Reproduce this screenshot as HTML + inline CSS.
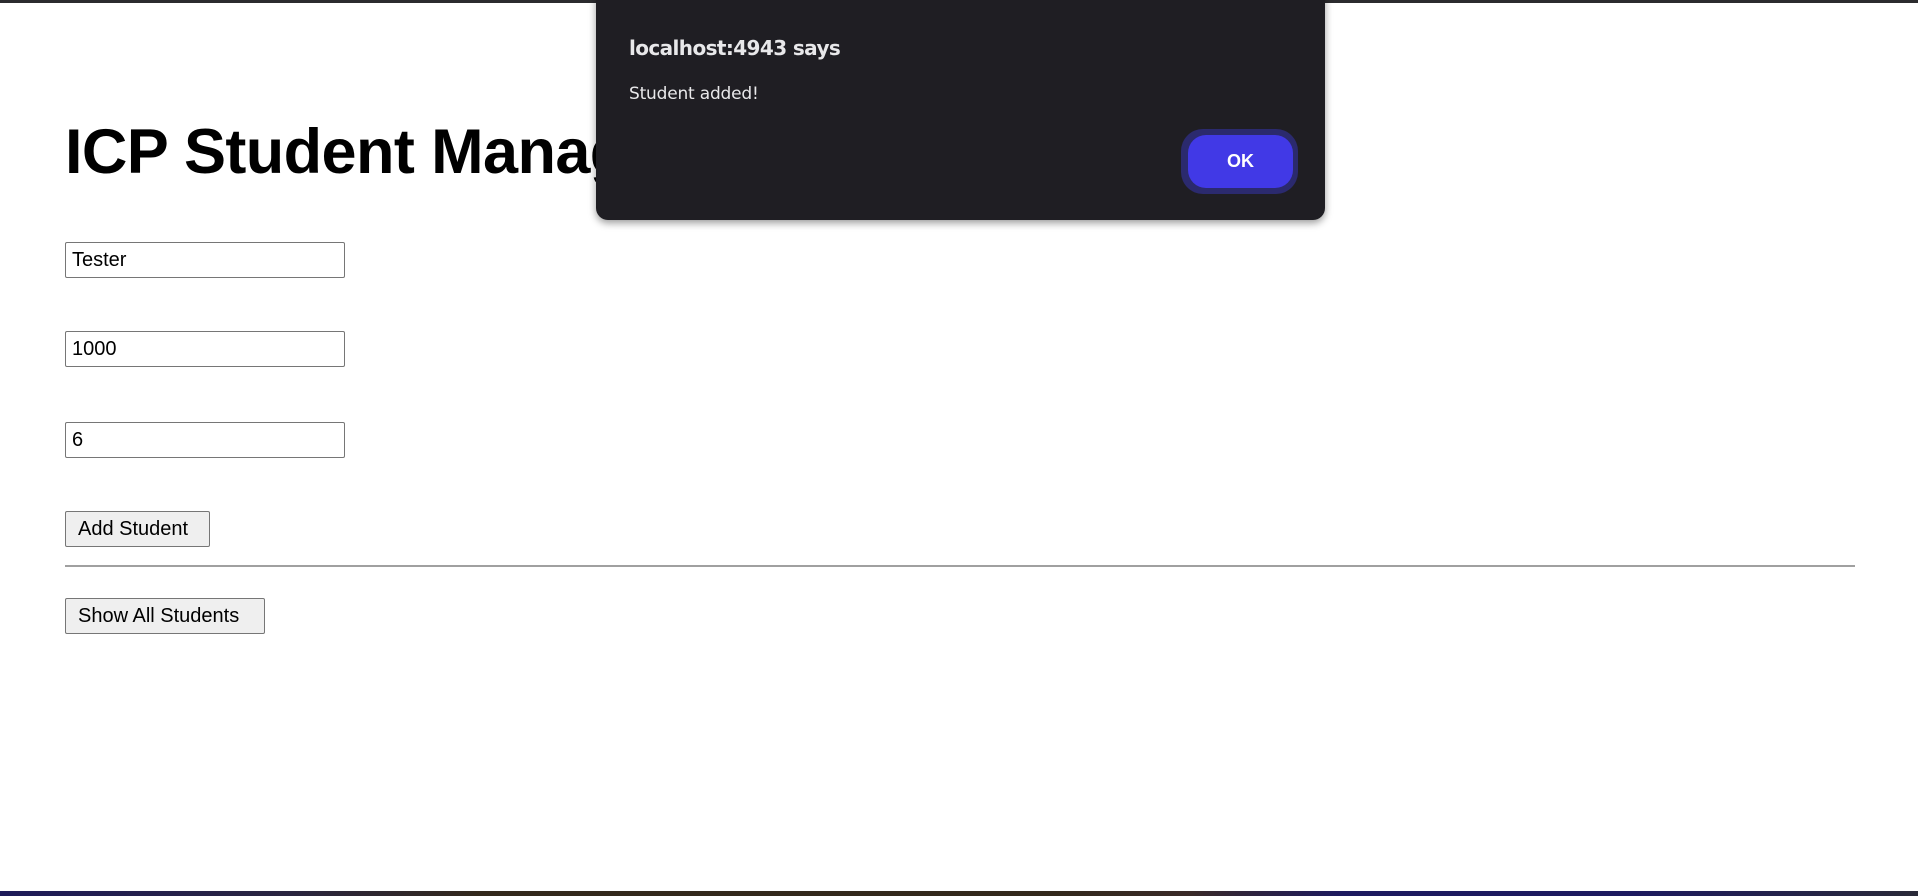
<!DOCTYPE html>
<html><head><meta charset="utf-8"><style>
html,body{margin:0;padding:0;width:1918px;height:896px;overflow:hidden;background:#fff;position:relative;font-family:"Liberation Sans",Arial,sans-serif}
.topbar{position:absolute;left:0;top:0;width:1918px;height:3px;background:#2b2b2e}
.bot{position:absolute;left:0;top:891px;width:1918px;height:5px;background:linear-gradient(90deg,#1e1b5a 0%,#2a2540 15%,#33291c 25%,#33291c 55%,#3a2a28 62%,#1d1a60 70%,#1d1a60 85%,#2a2a38 100%)}
h1{position:absolute;left:65px;top:114px;margin:0;font-size:63px;font-weight:bold;color:#000;white-space:nowrap;line-height:76px;letter-spacing:-0.6px}
.inp{position:absolute;left:65px;border:1px solid #767676;border-radius:2px;font-size:20px;line-height:34px;padding-left:6px;box-sizing:border-box;width:280px;height:36px;color:#000}
.btn{position:absolute;left:65px;height:36px;border:1px solid #767676;border-radius:2px;background:#efefef;font-size:20px;line-height:34px;box-sizing:border-box;padding:0 12px;color:#000;white-space:nowrap}
hr{position:absolute;left:65px;top:565px;width:1790px;margin:0;border:0;border-top:2px solid #a0a0a0}
.dlg{position:absolute;left:596px;top:-12px;width:729px;height:232px;background:#1f1e23;border-radius:12px;box-shadow:0 3px 8px rgba(0,0,0,.4)}
.t1{position:absolute;left:33px;top:48px;color:#e8e8ea;font-size:20px;font-weight:bold;font-family:"DejaVu Sans","Liberation Sans",sans-serif;letter-spacing:-0.6px}
.t2{position:absolute;left:33px;top:96px;color:#e8e8ea;font-size:17px;font-family:"DejaVu Sans","Liberation Sans",sans-serif;letter-spacing:-0.2px}
.ring{position:absolute;left:585px;top:141px;width:117px;height:65px;border-radius:22px;background:#2b2a6e}
.ok{position:absolute;left:592px;top:147px;width:105px;height:53px;border-radius:18px;background:#4139e6;color:#fff;font-weight:bold;font-size:18px;text-align:center;line-height:53px}
</style></head><body>
<div class="topbar"></div>
<h1>ICP Student Management</h1>
<div class="inp" style="top:242px">Tester</div>
<div class="inp" style="top:331px">1000</div>
<div class="inp" style="top:422px">6</div>
<div class="btn" style="top:511px;width:145px">Add Student</div>
<hr>
<div class="btn" style="top:598px;width:200px">Show All Students</div>
<div class="dlg">
<div class="t1">localhost:4943 says</div>
<div class="t2">Student added!</div>
<div class="ring"></div>
<div class="ok">OK</div>
</div>
<div class="bot"></div>
</body></html>
